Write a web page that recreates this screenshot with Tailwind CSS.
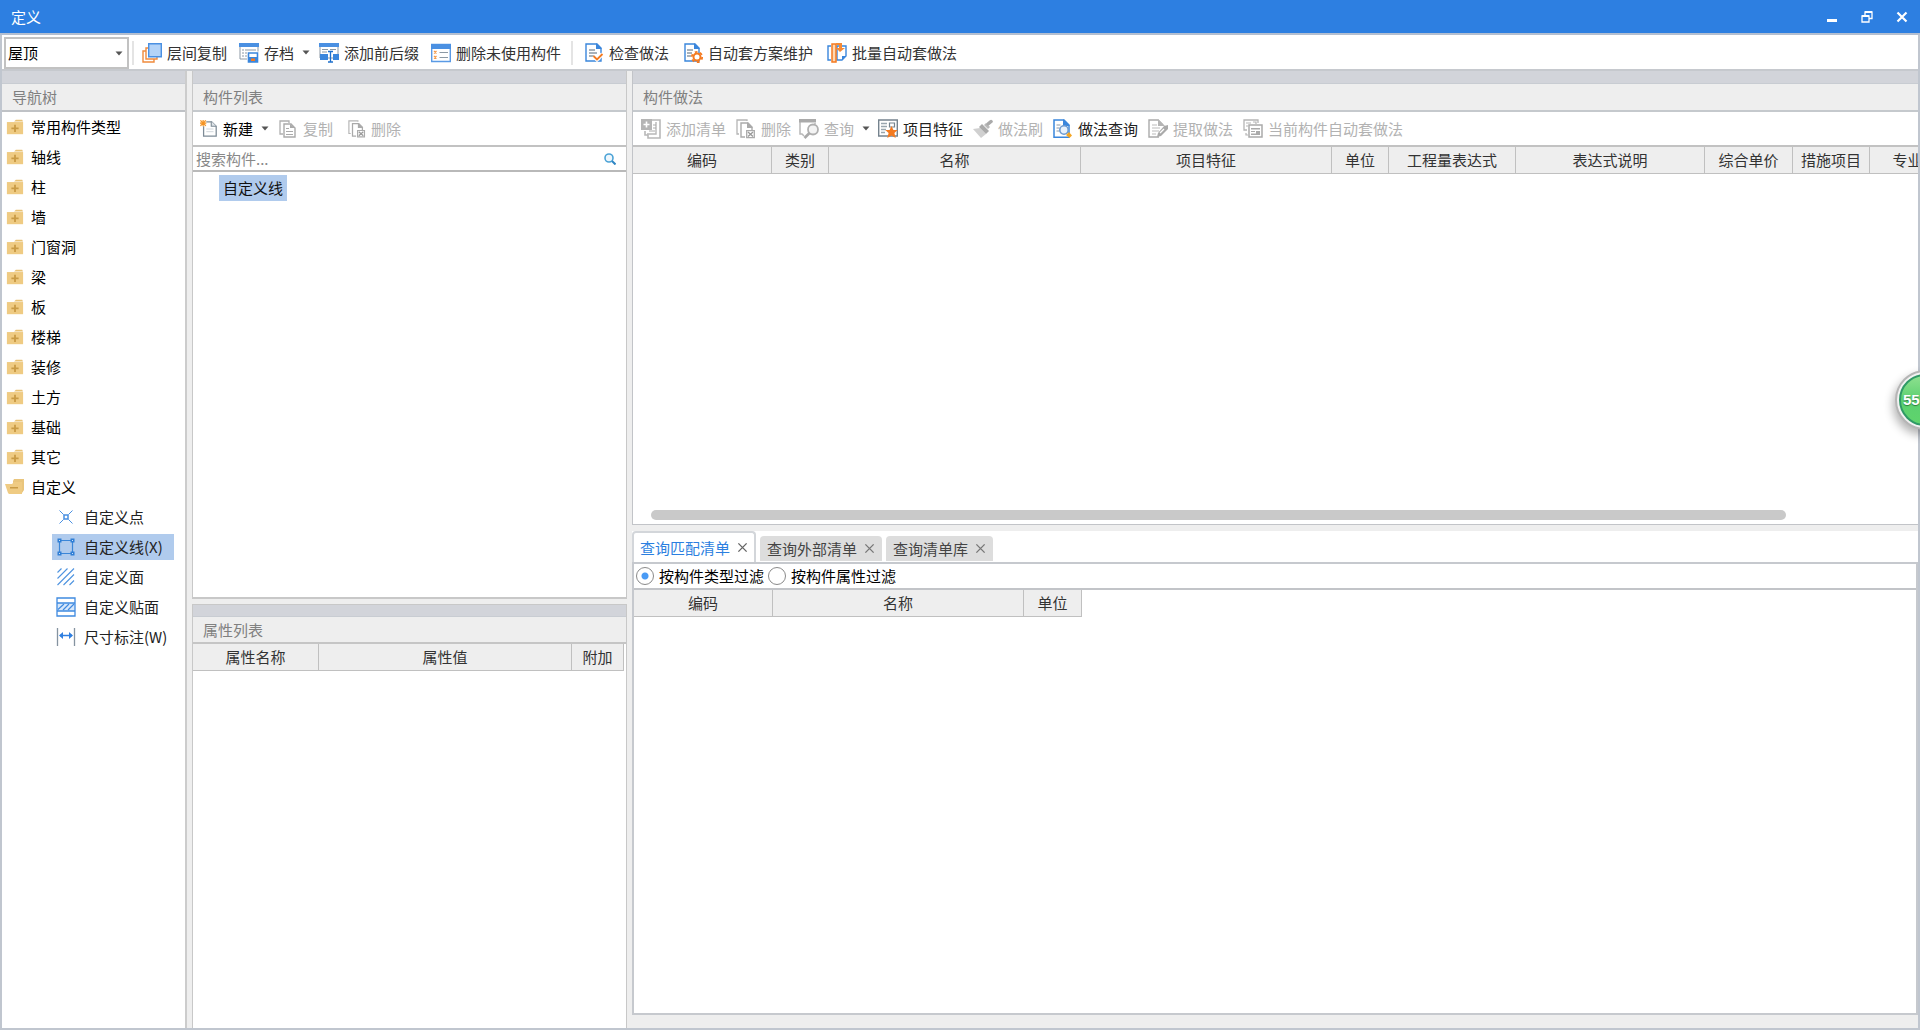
<!DOCTYPE html>
<html lang="zh-CN">
<head>
<meta charset="utf-8">
<title>定义</title>
<script src="https://cdn.jsdelivr.net/npm/@tailwindcss/browser@4"></script>
</head>
<body class="relative flex h-screen flex-col overflow-hidden bg-[#eeeeee] font-['Noto_Sans_CJK_SC',sans-serif] text-[15px] leading-5 text-[#333333]">

<svg class="hidden" aria-hidden="true">
  <symbol id="folder" viewBox="0 0 20 20"><path d="M9 4l2-2h7l1 2z" fill="#e9c275"/><path d="M1 4.500h18V18H1z" fill="#efcb83"/><path d="M9 7.500h2v3h3v2h-3v3H9v-3H6v-2h3z" fill="#c99b45"/></symbol>
  <symbol id="folder-open" viewBox="0 0 20 20"><path d="M8 4l1-2h10v11l-2 3V6H8z" fill="#e9c57c"/><path d="M0 7l3 9 1 1h13V5H9L7 7z" fill="#efcb83"/><path d="M5 10h8v1.500H5z" fill="#c99b45"/></symbol>
  <symbol id="point" viewBox="0 0 20 20"><g fill="none" stroke="#4a90e2"><path d="M3.500 3.500l4 4M16.500 3.500l-4 4M3.500 16.500l4-4M16.500 16.500l-4-4" stroke-width="1"/><path d="M8 8h4v4H8z" stroke-width="1.500"/></g></symbol>
  <symbol id="line" viewBox="0 0 20 20"><path d="M3.500 3.500h13v13h-13z" fill="none" stroke="#3a86d8" stroke-width="1.200"/><path d="M1.500 1.500h4v4h-4zM14.500 1.500h4v4h-4zM1.500 14.500h4v4h-4zM14.500 14.500h4v4h-4z" fill="#2f7fd6"/><path d="M3 3h1v1H3zM16 3h1v1h-1zM3 16h1v1H3zM16 16h1v1h-1z" fill="#cfe2f8"/></symbol>
  <symbol id="face" viewBox="0 0 20 20"><path d="M1.500 5.500l4-4M1.500 11.500l10-10M1.500 18L18 1.500M7.500 18L18 7.500M13.500 18l4.500-4.500" fill="none" stroke="#4f94e0" stroke-width="1.100"/></symbol>
  <symbol id="overlay" viewBox="0 0 20 20"><path d="M1 6h18v8H1z" fill="#d6e7fa"/><path d="M1 1h18v18H1zM1 6h18M1 14h18" fill="none" stroke="#3f8ae0" stroke-width="1.300"/><path d="M2 12.500L8 7M7 13l6-6M12 13l6-6" stroke="#3f8ae0" stroke-width="1.200"/></symbol>
  <symbol id="dim" viewBox="0 0 20 20"><path d="M1.500 1v18M18.500 1v18" stroke="#8593a0" stroke-width="1.300"/><path d="M4 8.500h12" stroke="#2f7fe0" stroke-width="1.500"/><path d="M3 8.500l4-3.500v7zM17 8.500L13 5v7z" fill="#2f7fe0"/></symbol>
  <symbol id="layers" viewBox="0 0 20 20"><path d="M3.500 8H1v11h11v-2.500M6 5H4v11h11v-2" fill="none" stroke="#f08a3c" stroke-width="1.400"/><path d="M6.700.700h12.600v13H6.700z" fill="#b3d3f8" stroke="#4a90e2" stroke-width="1.400"/></symbol>
  <symbol id="archive" viewBox="0 0 20 20"><path d="M1 1h18v15H1z" fill="#fff" stroke="#8c99a5"/><path d="M0 0h20v4H0z" fill="#4a90e2"/><path d="M3 7h2M6 7h11M3 10h2M6 10h4M3 13h2M6 13h3" stroke="#8c99a5" stroke-width="1.200"/><path d="M8 8.500h12V20H8z" fill="#fff"/><path d="M9.500 10h9v9h-9z" fill="#fff" stroke="#3a86dc" stroke-width="1.600"/><path d="M9 14h10v5H9z" fill="#3a86dc"/><path d="M12 15.500h4V18h-4z" fill="#f47a20"/></symbol>
  <symbol id="affix" viewBox="0 0 20 20"><path d="M1 1h18v14H1z" fill="#fff" stroke="#8c99a5"/><path d="M0 0h20v4H0z" fill="#4a90e2"/><path d="M3 6.500h6M11 6.500h6M3 9h5" stroke="#8c99a5" stroke-width="1.200"/><path d="M1 11h8v6H1zM14 11h6v6h-6z" fill="#3a86dc"/><path d="M9 8.500h5M9 19h5M11.500 8.500V19" stroke="#1f70cc" stroke-width="1.300"/></symbol>
  <symbol id="unused" viewBox="0 0 20 20"><path d="M.700 1.500h18.600v17H.700z" fill="#fff" stroke="#5a9ae5" stroke-width="1.400"/><path d="M0 1h20v5H0z" fill="#4a90e2"/><path d="M3 8l2.500 2.500M5.500 8L3 10.500M3 13l2.500 2.500m0-2.500L3 15.500" stroke="#f59a4a" stroke-width="1.200"/><path d="M8.500 9.500H17M8.500 14.500H17" stroke="#8c99a5" stroke-width="1.200"/></symbol>
  <symbol id="check" viewBox="0 0 20 20"><path d="M2 1h11l4 4v13H2z" fill="#fff" stroke="#3a86dc" stroke-width="1.400"/><path d="M12 0l6 6h-6z" fill="#3a86dc"/><path d="M5 7h6M5 10h8M5 13h5" stroke="#8c99a5" stroke-width="1.300"/><path d="M9.500 13l3.500 3.500 5.500-5.500" fill="none" stroke="#fff" stroke-width="4"/><path d="M9.500 13l3.500 3.500 5.500-5.500" fill="none" stroke="#f47a20" stroke-width="1.800"/></symbol>
  <symbol id="scheme" viewBox="0 0 20 20"><path d="M2 1h10l4 4v13H2z" fill="#fff" stroke="#3a86dc" stroke-width="1.400"/><path d="M11 0l6 6h-6z" fill="#3a86dc"/><path d="M4 7h6M4 10h5M4 13h4" stroke="#8c99a5" stroke-width="1.300"/><circle cx="14" cy="14" r="5.200" fill="none" stroke="#f47a20" stroke-width="1.800" stroke-dasharray="2.700 2.700"/><circle cx="14" cy="14" r="3.500" fill="#fff" stroke="#f47a20" stroke-width="2"/></symbol>
  <symbol id="batch" viewBox="0 0 20 20"><path d="M4 3H1v14h3" fill="#fff" stroke="#3a86dc" stroke-width="1.400"/><path d="M10 3h9v10l-4 4h-5z" fill="#fff" stroke="#3a86dc" stroke-width="1.400"/><path d="M15 17v-4h4z" fill="#3a86dc"/><path d="M5 1h4v18H5z" fill="#ffd7b0" stroke="#f47a20" stroke-width="1.500"/><path d="M9 0h6v5h3l-5 4-4-4h3V2H9z" fill="#f58a35"/></symbol>
  <symbol id="new" viewBox="0 0 20 20"><path d="M4 2h9l5 5v11H4z" fill="#fff" stroke="#7d8b96" stroke-width="1.400"/><path d="M12.500 1.500V7H18" fill="#dfe4e8" stroke="#7d8b96" stroke-width="1.200"/><path d="M7 10h8M7 13h8" stroke="#ccd3d8"/><path d="M0 0h7v7H0z" fill="#fff0dc"/><path d="M.500.500l6 6m0-6l-6 6M3.500 0v7M0 3.500h7" stroke="#f59322" stroke-width="1.200"/></symbol>
  <symbol id="copy" viewBox="0 0 20 20"><path d="M5 15H2V2h9v2" fill="none" stroke="#b0b0b0" stroke-width="1.300"/><path d="M6 5h7l4 4v9H6z" fill="#fff" stroke="#aaa" stroke-width="1.400"/><path d="M12 5v4h5zM8 9h3v1H8zM8 12h7v1H8zM8 15h7v1H8z" fill="#aaa"/></symbol>
  <symbol id="remove" viewBox="0 0 20 20"><path d="M3 15H1V1h10v1" fill="none" stroke="#b5b5b5" stroke-width="1.300"/><path d="M9 18H5V4h7l4 4v3" fill="#fff" stroke="#aaa" stroke-width="1.400"/><path d="M11 3v6h6z" fill="#aaa"/><path d="M10.700 11.700h7.600v7h-7.600z" fill="#fff" stroke="#aaa" stroke-width="1.300"/><path d="M12 13l5 4.500m0-4.500l-5 4.500" stroke="#999" stroke-width="1.400"/></symbol>
  <symbol id="addlist" viewBox="0 0 20 20"><path d="M4 12v4h3v3h12V1h-8" fill="none" stroke="#b8b8b8" stroke-width="1.600"/><path d="M15 3v12H6" fill="none" stroke="#b8b8b8" stroke-width="1.400"/><path d="M12 6h3M12 9h3M8 12h6" stroke="#aaa"/><path d="M0 0h11v11H0z" fill="#b5b5b5"/><path d="M5.500 2.500v6M2.500 5.500h6" stroke="#fff" stroke-width="1.600"/></symbol>
  <symbol id="query" viewBox="0 0 20 20"><path d="M1 3v12h2l2 2M16 4v1" fill="none" stroke="#b8b8b8" stroke-width="1.500"/><path d="M0 0h17v3.500H0z" fill="#aaa"/><circle cx="14" cy="10.500" r="5" fill="#f4f4f4" stroke="#b0b0b0" stroke-width="1.800"/><path d="M10.500 14L5.500 19" stroke="#aaa" stroke-width="2.600"/></symbol>
  <symbol id="feature" viewBox="0 0 20 20"><path d="M.700 1h18.600v16H.700z" fill="#fff" stroke="#75838e" stroke-width="1.400"/><path d="M3 4.500h6M3 7.500h6M3 10.500h5M3 13.500h4" stroke="#9aa6af" stroke-width="1.300"/><path d="M11.500 4h5v4h-5z" fill="none" stroke="#75838e" stroke-width="1.200"/><path d="M13.500 7l1.900 4h4.300l-3.300 3 1.300 5-4.200-2.500L9.300 19l1.300-5-3.300-3h4.300z" fill="#f47a20"/></symbol>
  <symbol id="brush" viewBox="0 0 20 20"><path d="M0 10l7-1 6 6-5 4z" fill="#d0d0d0"/><path d="M6 8l3-3 7 7-3 3z" fill="#aaa"/><path d="M11 6l2-2 4 4-2 2z" fill="#bbb"/><path d="M15 5l3-2.500" stroke="#aaa" stroke-width="3.500" stroke-linecap="round"/></symbol>
  <symbol id="lookup" viewBox="0 0 20 20"><path d="M1 1h10l5 5v12.300H1z" fill="#fff" stroke="#3a86dc" stroke-width="1.500"/><path d="M10 0l7 7h-7z" fill="#3a86dc"/><path d="M3.500 6h4M3.500 9h3M3.500 12h3" stroke="#8c99a5"/><circle cx="11" cy="11" r="4.200" fill="#e7f1fc" stroke="#6c9ad0" stroke-width="1.600"/><path d="M13 16l3-3 3 3.500-2.500 2.500z" fill="#f5a623"/></symbol>
  <symbol id="extract" viewBox="0 0 20 20"><path d="M11 18H1V1h9l5 5" fill="none" stroke="#aaa" stroke-width="1.400"/><path d="M10 0l7 7h-7z" fill="#b5b5b5"/><path d="M4 6h5M4 9h8M4 12h7M4 15h4" stroke="#bbb" stroke-width="1.200"/><path d="M9 18l1-4 6-7 4-1v4l-7 7z" fill="#aaa"/><path d="M12 14l4-4" stroke="#fff" stroke-width="1.200"/></symbol>
  <symbol id="auto" viewBox="0 0 20 20"><path d="M4 11H1V1h14v3" fill="none" stroke="#b5b5b5" stroke-width="1.300"/><path d="M3 4h5M10 3h3v2M3 7h2M3 14v2h2" fill="none" stroke="#b5b5b5" stroke-width="1.200"/><path d="M6 6h13v12H6z" fill="#fff" stroke="#aaa" stroke-width="1.500"/><path d="M8 9h9v1.500H8zM8 12h4v1H8zM8 14.500h9V16H8zM13 12h4v3h-4z" fill="#aaa"/></symbol>
  <symbol id="close" viewBox="0 0 12 12"><path d="M1.500 1.500l9 9m0-9l-9 9" fill="none" stroke="currentColor" stroke-width="1.500"/></symbol>
  <symbol id="caret" viewBox="0 0 8 5"><path d="M.500.500h7L4 4.500z" fill="#555"/></symbol>
</svg>

<header class="flex h-[35px] shrink-0 items-center justify-between border-b-2 border-[#b4bfd0] bg-[#2d7fe1] pl-[11px] pr-3 text-white">
  <h1>定义</h1>
  <div class="flex items-center gap-[23px]">
    <button aria-label="最小化" class="block size-3"><svg class="size-3" viewBox="0 0 12 12"><path d="M1 8h10v3H1z" fill="#fff"/></svg></button>
    <button aria-label="还原" class="block size-3"><svg class="size-3" viewBox="0 0 12 12"><path d="M1 5h7v6H1zM4 4.500V1h7v6.500H8.500" fill="none" stroke="#fff" stroke-width="1.300"/><path d="M1 4h7v2H1zM4 0h7v2H4z" fill="#fff"/></svg></button>
    <button aria-label="关闭" class="block size-3"><svg class="size-3" viewBox="0 0 12 12"><path d="M1.500 1.500l9 9m0-9l-9 9" stroke="#fff" stroke-width="2.200"/></svg></button>
  </div>
</header>

<div class="flex min-h-0 flex-1 flex-col border-x-2 border-b-2 border-[#c0c6cf]">
  <div class="flex h-9 shrink-0 items-center border-b-2 border-[#c6c9ce] bg-white pl-[2px] pt-[1px]">
    <div class="relative mr-[3px] h-8 w-[125px]">
      <select aria-label="构件类型" class="h-8 w-full appearance-none border-2 border-[#c2c2c2] bg-white pl-[2px] text-black"><option>屋顶</option></select>
      <svg class="pointer-events-none absolute right-[6px] top-[14px] h-[5px] w-2"><use href="#caret"/></svg>
    </div>
    <div class="mr-[2px] h-6 w-[2px] bg-[#e4e4e4]"></div>
    <button class="flex h-7 items-center gap-[5px] px-[6px]"><svg class="size-5"><use href="#layers"/></svg>层间复制</button>
    <button class="flex h-7 items-center gap-[5px] pl-[6px] pr-[3px]"><svg class="size-5"><use href="#archive"/></svg>存档<svg class="ml-[3px] h-[5px] w-2"><use href="#caret"/></svg></button>
    <button class="flex h-7 items-center gap-[5px] px-[6px]"><svg class="size-5"><use href="#affix"/></svg>添加前后缀</button>
    <button class="flex h-7 items-center gap-[5px] px-[6px]"><svg class="size-5"><use href="#unused"/></svg>删除未使用构件</button>
    <div class="mx-1 h-6 w-[2px] bg-[#e4e4e4]"></div>
    <button class="flex h-7 items-center gap-[5px] px-[7px]"><svg class="size-5"><use href="#check"/></svg>检查做法</button>
    <button class="flex h-7 items-center gap-[5px] px-[7px]"><svg class="size-5"><use href="#scheme"/></svg>自动套方案维护</button>
    <button class="flex h-7 items-center gap-[5px] px-[7px]"><svg class="size-5"><use href="#batch"/></svg>批量自动套做法</button>
  </div>

  <main class="flex min-h-0 flex-1 gap-[5px]">
    <nav class="flex w-[185px] shrink-0 flex-col border-r-2 border-[#cccccc] bg-white" aria-label="导航树">
      <div class="h-[13px] shrink-0 border-b border-[#c8ccd2] bg-[#d2d4da]"></div>
      <h2 class="flex h-7 shrink-0 items-center border-b-2 border-[#bfc2c6] bg-[#eeeeee] pl-[10px] text-[#808080]">导航树</h2>
      <ul class="text-black">
        <li class="flex h-[30px] items-center gap-[7px] pl-1"><svg class="size-[18px]"><use href="#folder"/></svg>常用构件类型</li>
        <li class="flex h-[30px] items-center gap-[7px] pl-1"><svg class="size-[18px]"><use href="#folder"/></svg>轴线</li>
        <li class="flex h-[30px] items-center gap-[7px] pl-1"><svg class="size-[18px]"><use href="#folder"/></svg>柱</li>
        <li class="flex h-[30px] items-center gap-[7px] pl-1"><svg class="size-[18px]"><use href="#folder"/></svg>墙</li>
        <li class="flex h-[30px] items-center gap-[7px] pl-1"><svg class="size-[18px]"><use href="#folder"/></svg>门窗洞</li>
        <li class="flex h-[30px] items-center gap-[7px] pl-1"><svg class="size-[18px]"><use href="#folder"/></svg>梁</li>
        <li class="flex h-[30px] items-center gap-[7px] pl-1"><svg class="size-[18px]"><use href="#folder"/></svg>板</li>
        <li class="flex h-[30px] items-center gap-[7px] pl-1"><svg class="size-[18px]"><use href="#folder"/></svg>楼梯</li>
        <li class="flex h-[30px] items-center gap-[7px] pl-1"><svg class="size-[18px]"><use href="#folder"/></svg>装修</li>
        <li class="flex h-[30px] items-center gap-[7px] pl-1"><svg class="size-[18px]"><use href="#folder"/></svg>土方</li>
        <li class="flex h-[30px] items-center gap-[7px] pl-1"><svg class="size-[18px]"><use href="#folder"/></svg>基础</li>
        <li class="flex h-[30px] items-center gap-[7px] pl-1"><svg class="size-[18px]"><use href="#folder"/></svg>其它</li>
        <li>
          <div class="flex h-[30px] items-center gap-[6px] pl-[3px]"><svg class="size-5"><use href="#folder-open"/></svg>自定义</div>
          <ul class="flex flex-col items-start pl-[50px] text-[#222222]">
            <li class="flex h-[30px] items-center gap-2 pl-1 pr-2"><svg class="size-5"><use href="#point"/></svg>自定义点</li>
            <li class="my-[2px] flex h-[26px] items-center gap-2 bg-[#b0cbed] pl-1 pr-[11px]"><svg class="size-5"><use href="#line"/></svg>自定义线(X)</li>
            <li class="flex h-[30px] items-center gap-2 pl-1 pr-2"><svg class="size-5"><use href="#face"/></svg>自定义面</li>
            <li class="flex h-[30px] items-center gap-2 pl-1 pr-2"><svg class="size-5"><use href="#overlay"/></svg>自定义贴面</li>
            <li class="flex h-[30px] items-center gap-2 pl-1 pr-2"><svg class="size-5"><use href="#dim"/></svg>尺寸标注(W)</li>
          </ul>
        </li>
      </ul>
    </nav>

    <div class="flex w-[435px] shrink-0 flex-col gap-[5px]">
      <section class="flex min-h-0 flex-[528] flex-col border-x border-b-2 border-[#c8c8c8] bg-white">
        <div class="h-[13px] shrink-0 border-b border-[#c8ccd2] bg-[#d2d4da]"></div>
        <h2 class="flex h-7 shrink-0 items-center border-b-2 border-[#c5c9cd] bg-[#eeeeee] pl-[10px] text-[#808080]">构件列表</h2>
        <div class="flex h-[35px] shrink-0 items-center border-b-2 border-[#c2c2c2]">
          <button class="flex h-7 items-center gap-[5px] pl-[7px] pr-[3px] text-black"><svg class="size-[18px]"><use href="#new"/></svg>新建<svg class="ml-[3px] h-[5px] w-2"><use href="#caret"/></svg></button>
          <button disabled class="flex h-7 items-center gap-[5px] px-[6px] text-[#b2b2b2]"><svg class="size-5"><use href="#copy"/></svg>复制</button>
          <button disabled class="ml-[3px] flex h-7 items-center gap-[5px] px-[6px] text-[#b2b2b2]"><svg class="size-[18px]"><use href="#remove"/></svg>删除</button>
        </div>
        <label class="flex h-[25px] shrink-0 items-center border-b-2 border-[#b9b9b9] pl-[3px] pr-[10px]">
          <input type="text" aria-label="搜索构件" placeholder="搜索构件..." class="min-w-0 flex-1 bg-white outline-none placeholder:text-[#888888]">
          <svg class="size-3" viewBox="0 0 12 12"><circle cx="5" cy="5" r="4" fill="#eef7fd" stroke="#4ca3d6" stroke-width="1.600"/><path d="M8 8l3.500 3.500" stroke="#2f86c4" stroke-width="2"/></svg>
        </label>
        <ul class="flex pl-[26px] pt-[3px] text-[#111111]"><li class="flex h-[26px] items-center bg-[#b0cbed] px-1">自定义线</li></ul>
      </section>
      <section class="flex min-h-0 flex-[424] flex-col border-x border-t border-[#c8c8c8] bg-white">
        <div class="h-[12px] shrink-0 border-b border-[#c8ccd2] bg-[#d2d4da]"></div>
        <h2 class="flex h-[27px] shrink-0 items-center border-b-2 border-[#c5c5c5] bg-[#eeeeee] pl-[10px] text-[#808080]">属性列表</h2>
        <table class="mr-[2px] table-fixed border-separate border-spacing-0">
          <colgroup><col class="w-[126px]"><col><col class="w-[52px]"></colgroup>
          <thead><tr class="h-[27px] bg-[#eeeeee]">
            <th class="border-b border-r border-[#c0c0c0] p-0 font-normal">属性名称</th>
            <th class="border-b border-r border-[#c0c0c0] p-0 font-normal">属性值</th>
            <th class="border-b border-r border-[#c0c0c0] p-0 font-normal">附加</th>
          </tr></thead>
        </table>
      </section>
    </div>

    <div class="flex min-w-0 flex-1 flex-col">
      <section class="flex min-h-0 flex-[455] flex-col border-b border-l border-[#c2c4c8] bg-white">
        <div class="h-[13px] shrink-0 border-b border-[#c8ccd2] bg-[#d2d4da]"></div>
        <h2 class="flex h-7 shrink-0 items-center border-b-2 border-[#c5c9cd] bg-[#eeeeee] pl-[10px] text-[#808080]">构件做法</h2>
        <div class="flex h-[35px] shrink-0 items-center border-b-2 border-[#c2c2c2] pl-[3px]">
          <button disabled class="flex h-7 items-center gap-[5px] px-[5px] text-[#b2b2b2]"><svg class="size-5"><use href="#addlist"/></svg>添加清单</button>
          <button disabled class="flex h-7 items-center gap-[5px] px-[5px] text-[#b2b2b2]"><svg class="size-5"><use href="#remove"/></svg>删除</button>
          <button disabled class="flex h-7 items-center gap-[5px] pl-[3px] pr-[3px] text-[#b2b2b2]"><svg class="size-5"><use href="#query"/></svg>查询<svg class="ml-[3px] h-[5px] w-2"><use href="#caret"/></svg></button>
          <button class="flex h-7 items-center gap-[5px] px-[5px] text-[#222222]"><svg class="size-5"><use href="#feature"/></svg>项目特征</button>
          <button disabled class="flex h-7 items-center gap-[5px] px-[5px] text-[#b2b2b2]"><svg class="size-5"><use href="#brush"/></svg>做法刷</button>
          <button class="flex h-7 items-center gap-[5px] px-[5px] text-[#222222]"><svg class="size-5"><use href="#lookup"/></svg>做法查询</button>
          <button disabled class="flex h-7 items-center gap-[5px] px-[5px] text-[#b2b2b2]"><svg class="size-5"><use href="#extract"/></svg>提取做法</button>
          <button disabled class="flex h-7 items-center gap-[5px] px-[5px] text-[#b2b2b2]"><svg class="size-5"><use href="#auto"/></svg>当前构件自动套做法</button>
        </div>
        <div class="min-h-0 flex-1 overflow-hidden">
          <table class="w-[1313px] table-fixed border-separate border-spacing-0">
            <colgroup><col class="w-[139px]"><col class="w-[57px]"><col class="w-[252px]"><col class="w-[251px]"><col class="w-[57px]"><col class="w-[127px]"><col class="w-[189px]"><col class="w-[88px]"><col class="w-[77px]"><col class="w-[76px]"></colgroup>
            <thead><tr class="h-[27px] bg-[#eeeeee]">
              <th class="border-b border-r border-[#c0c0c0] p-0 font-normal">编码</th>
              <th class="border-b border-r border-[#c0c0c0] p-0 font-normal">类别</th>
              <th class="border-b border-r border-[#c0c0c0] p-0 font-normal">名称</th>
              <th class="border-b border-r border-[#c0c0c0] p-0 font-normal">项目特征</th>
              <th class="border-b border-r border-[#c0c0c0] p-0 font-normal">单位</th>
              <th class="border-b border-r border-[#c0c0c0] p-0 font-normal">工程量表达式</th>
              <th class="border-b border-r border-[#c0c0c0] p-0 font-normal">表达式说明</th>
              <th class="border-b border-r border-[#c0c0c0] p-0 font-normal">综合单价</th>
              <th class="border-b border-r border-[#c0c0c0] p-0 font-normal">措施项目</th>
              <th class="border-b border-r border-[#c0c0c0] p-0 font-normal">专业</th>
            </tr></thead>
          </table>
        </div>
        <div class="mb-1 shrink-0 pl-[18px]"><div class="h-[10px] rounded-full bg-[#c9c9c9]" style="width:89.600%"></div></div>
      </section>

      <section class="mt-[6px] flex min-h-0 flex-[486] flex-col bg-white">
        <div class="flex h-[31px] shrink-0 items-end gap-1" role="tablist">
          <div class="flex h-[31px] items-center gap-[7px] rounded-t-[4px] border-x-2 border-t-2 border-[#d3d6da] bg-white px-[6px] text-[#2b7fe0]"><button role="tab" aria-selected="true">查询匹配清单</button><button aria-label="关闭查询匹配清单" class="text-[#666666]"><svg class="size-[11px]"><use href="#close"/></svg></button></div>
          <div class="mb-[1px] flex h-[25px] items-center gap-[7px] rounded-t-[4px] bg-[#dddddd] px-[7px] text-[#444444]"><button role="tab">查询外部清单</button><button aria-label="关闭查询外部清单" class="text-[#777777]"><svg class="size-[11px]"><use href="#close"/></svg></button></div>
          <div class="mb-[1px] flex h-[25px] items-center gap-[7px] rounded-t-[4px] bg-[#dddddd] px-[7px] text-[#444444]"><button role="tab">查询清单库</button><button aria-label="关闭查询清单库" class="text-[#777777]"><svg class="size-[11px]"><use href="#close"/></svg></button></div>
        </div>
        <div class="flex min-h-0 flex-1 flex-col border-x-2 border-y-2 border-[#c6c9ce]">
          <div class="flex h-[26px] shrink-0 items-center gap-1 border-b-2 border-[#c2c4c8] pl-[2px] text-black">
            <label class="flex items-center gap-[5px]"><input type="radio" name="filter" checked class="size-[18px] appearance-none rounded-full border border-[#8a8a8a] bg-white bg-[radial-gradient(circle,#4a9bf5_3px,transparent_4px)]">按构件类型过滤</label>
            <label class="flex items-center gap-[5px]"><input type="radio" name="filter" class="size-[18px] appearance-none rounded-full border border-[#8a8a8a] bg-white">按构件属性过滤</label>
          </div>
          <table class="w-[448px] table-fixed border-separate border-spacing-0">
            <colgroup><col class="w-[139px]"><col class="w-[251px]"><col class="w-[58px]"></colgroup>
            <thead><tr class="h-[27px] bg-[#eeeeee]">
              <th class="border-b border-r border-[#c0c0c0] p-0 font-normal">编码</th>
              <th class="border-b border-r border-[#c0c0c0] p-0 font-normal">名称</th>
              <th class="border-b border-r border-[#c0c0c0] p-0 font-normal">单位</th>
            </tr></thead>
          </table>
        </div>
      </section>
      <div class="h-[13px] shrink-0"></div>
    </div>
  </main>
</div>

<div class="absolute -right-[35px] top-[370px] flex size-[60px] items-center rounded-full border-2 border-[#b5b5b5] bg-[#f2f2f2] p-[2px] shadow-[-2px_5px_10px_rgba(0,0,0,0.3)]">
  <div class="flex size-full items-center rounded-full border-2 border-[#2f9a66] bg-gradient-to-b from-[#8de08f] via-[#5bd070] to-[#5fd46c] pl-[2px] font-['Liberation_Sans',sans-serif] text-[15px] font-bold text-white [text-shadow:0_1px_1px_#2b7a3c]">55</div>
</div>
</body>
</html>
